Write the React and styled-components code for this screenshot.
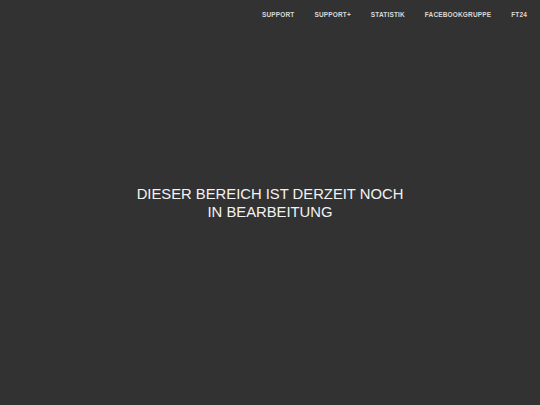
import React from 'react'
import styled, { createGlobalStyle } from 'styled-components'

const GlobalStyle = createGlobalStyle`
  html, body {
    margin: 0;
    padding: 0;
    height: 100%;
    background: #323232;
  }
  #root {
    height: 100%;
  }
`

const links = ['Support', 'Support+', 'Statistik', 'Facebookgruppe', 'FT24']

const App = () =>
  <>
    <GlobalStyle />
    <S.Page>
      <S.Nav>
        {links.map(link =>
          <S.NavLink key={link} href='#'>{link}</S.NavLink>
        )}
      </S.Nav>
      <S.Main>
        <S.Notice>
          Dieser Bereich ist derzeit noch<br />in Bearbeitung
        </S.Notice>
      </S.Main>
    </S.Page>
  </>

const S = {
  Page: styled.div`
    position: relative;
    display: flex;
    flex-direction: column;
    height: 100vh;
    background: #323232;
    font-family: 'Liberation Sans', Arial, sans-serif;
  `,
  Nav: styled.nav`
    position: absolute;
    top: 0;
    right: 0;
    display: flex;
    gap: 20px;
    padding: 10px 13px 0 0;
  `,
  NavLink: styled.a`
    font-size: 6.5px;
    font-weight: 700;
    line-height: 9px;
    letter-spacing: 0.15px;
    color: #d8d8d8;
    text-decoration: none;
    text-transform: uppercase;
  `,
  Main: styled.main`
    display: flex;
    flex: 1;
    align-items: center;
    justify-content: center;
  `,
  Notice: styled.h1`
    margin: 0;
    font-size: 14.8px;
    font-weight: 400;
    line-height: 18px;
    color: #f2f2f2;
    text-align: center;
    text-transform: uppercase;
  `
}

export default App
